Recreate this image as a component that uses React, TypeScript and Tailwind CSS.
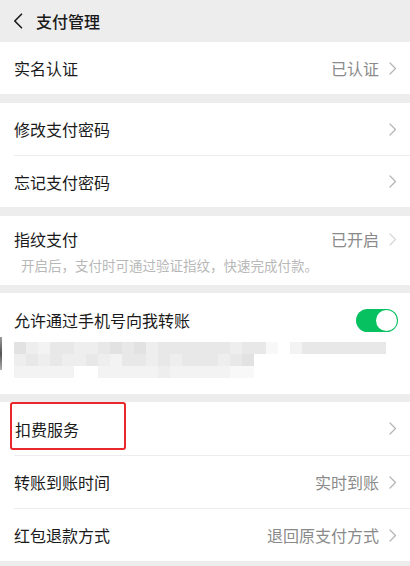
import React from "react";

const FONT = '"Noto Sans CJK SC", "Noto Sans", sans-serif';

const shade: Record<string, string> = {
  a: "bg-[#e2e2e2]",
  b: "bg-[#e8e8e8]",
  c: "bg-[#eeeeee]",
  d: "bg-[#f3f3f3]",
  e: "bg-[#f8f8f8]",
  w: "bg-white",
};

// pixelated (mosaic) rows under the toggle
const mosaic = [
  "acdbbccbabacbbbbbbcbbewdbbbbbbb",
  "cbcbccbcdbbcbcbbbcba",
  "dddddwwdddddcdddddee",
];

function BackIcon() {
  return (
    <svg width="10" height="16" viewBox="0 0 10 16" fill="none">
      <path d="M8.5 1.2L1.8 8l6.7 6.8" stroke="#1a1a1a" strokeWidth="1.6" strokeLinecap="round" strokeLinejoin="round" />
    </svg>
  );
}

function Chevron({ color = "#b3b3b3" }: { color?: string }) {
  return (
    <svg width="8" height="13" viewBox="0 0 8 13" fill="none" className="ml-[10px]">
      <path d="M1 1l5.5 5.5L1 12" stroke={color} strokeWidth="1.2" strokeLinecap="round" strokeLinejoin="round" />
    </svg>
  );
}

function Row({ title, value, h = "h-[52px]" }: { title: string; value?: string; h?: string }) {
  return (
    <div className={`flex items-center justify-between pl-[14px] pr-[13px] bg-white ${h}`}>
      <span className="text-[16px] text-[#1a1a1a]">{title}</span>
      <div className="flex items-center">
        {value && <span className="text-[16px] text-[#8a8a8a]">{value}</span>}
        <Chevron />
      </div>
    </div>
  );
}

function Divider() {
  return (
    <div className="bg-white pl-[14px]">
      <div className="h-px bg-[#ededed]" />
    </div>
  );
}

function Gap({ h }: { h: string }) {
  return <div className={`${h} bg-[#ededed]`} />;
}

export default function App() {
  return (
    <div className="w-[410px] h-[566px] overflow-hidden bg-[#ededed]" style={{ fontFamily: FONT }}>
      <header className="flex items-center h-[42px] pl-[13px] bg-[#ededed]">
        <BackIcon />
        <span className="ml-[13px] text-[16px] font-medium text-[#1a1a1a]">支付管理</span>
      </header>

      <Row title="实名认证" value="已认证" />
      <Gap h="h-[9px]" />
      <Row title="修改支付密码" />
      <Divider />
      <Row title="忘记支付密码" h="h-[51px]" />
      <Gap h="h-[9px]" />

      <div className="bg-white h-[69px] pl-[14px] pr-[13px] pt-[11px]">
        <div className="flex items-center justify-between">
          <span className="text-[16px] text-[#1a1a1a] leading-[24px]">指纹支付</span>
          <div className="flex items-center">
            <span className="text-[16px] text-[#8a8a8a]">已开启</span>
            <Chevron color="#d6d6d6" />
          </div>
        </div>
        <p className="mt-[5px] pl-[7px] text-[13.5px] leading-[18px] text-[#b8b8b8]">开启后，支付时可通过验证指纹，快速完成付款。</p>
      </div>
      <Gap h="h-[8px]" />

      <div className="bg-white h-[101px] pr-[12px] pt-[14px]">
        <div className="flex items-center justify-between pl-[14px]">
          <span className="text-[16px] text-[#1a1a1a] leading-[26px]">允许通过手机号向我转账</span>
          <div className="flex items-center justify-end w-[42px] h-[23px] rounded-full bg-[#07c160] pr-px">
            <div className="w-[21px] h-[21px] rounded-full bg-white" />
          </div>
        </div>
        <div className="flex items-start mt-[4px]">
          <div className="w-[2px] h-[33px] bg-gradient-to-b from-[#9a9a9a] via-[#555] to-[#b0b0b0]" />
          <div className="ml-[12px] mt-[5px] flex flex-col">
            {mosaic.map((r, i) => (
              <div key={i} className="flex h-[12px]">
                {r.split("").map((c, j) => (
                  <div key={j} className={`w-[12px] h-full ${shade[c]}`} />
                ))}
              </div>
            ))}
          </div>
        </div>
      </div>
      <Gap h="h-[8px]" />

      <div className="bg-white">
        <div className="flex items-center justify-between h-[53px] pr-[13px]">
          <div className="flex items-center h-[48px] w-[116px] ml-[10px] mb-[5px] pl-[3px] border-2 border-[#e8282b] rounded-[3px]">
            <span className="text-[16px] text-[#1a1a1a] mt-[5px]">扣费服务</span>
          </div>
          <Chevron />
        </div>
      </div>
      <Divider />
      <Row title="转账到账时间" value="实时到账" />
      <Divider />
      <Row title="红包退款方式" value="退回原支付方式" />
    </div>
  );
}
